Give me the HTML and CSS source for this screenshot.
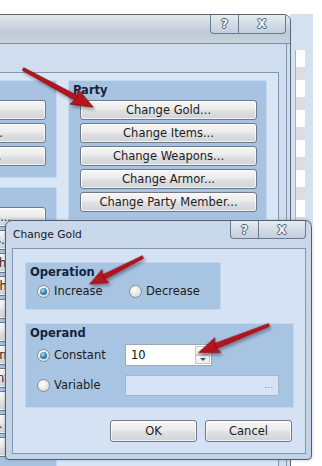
FILE: index.html
```html
<!DOCTYPE html>
<html>
<head>
<meta charset="utf-8">
<link rel="stylesheet" href="styles.css">
</head>
<body>
<div class="desk">
  <div class="win3"><div class="win3-col"></div></div>

  <div class="bgwin">
    <div class="bg-title">
      <div class="caps">
        <span class="cap cap-help">?</span>
        <span class="cap cap-close">X</span>
      </div>
    </div>
    <div class="bg-body">
      <div class="bg-frame">
        <div class="bg-client">
          <div class="col-left">
            <div class="grp grp-l1">
              <div class="grp-title">Message</div>
              <div class="btn-stack">
                <div class="btn">Show Text...</div>
                <div class="btn">Show Choices...</div>
                <div class="btn">Control Timer...</div>
              </div>
            </div>
            <div class="grp grp-l2">
              <div class="grp-title">Game Progression</div>
              <div class="btn-stack">
                <div class="btn">Control Switches...</div>
                <div class="btn">Control Variables...</div>
                <div class="btn">Control Self Switch...</div>
                <div class="btn">Conditional Branch...</div>
                <div class="btn">Loop...</div>
                <div class="btn">Break Loop...</div>
                <div class="btn">Exit Event Processing...</div>
                <div class="btn">Call Common Event...</div>
                <div class="btn">Label...</div>
                <div class="btn">Jump to Label...</div>
                <div class="btn">Comment...</div>
              </div>
            </div>
          </div>
          <div class="grp grp-party">
            <div class="grp-title">Party</div>
            <div class="btn-stack">
              <div class="btn">Change Gold...</div>
              <div class="btn">Change Items...</div>
              <div class="btn">Change Weapons...</div>
              <div class="btn">Change Armor...</div>
              <div class="btn">Change Party Member...</div>
            </div>
          </div>
        </div>
      </div>
    </div>
  </div>

  <div class="dlg">
    <div class="dlg-title">
      <span class="dlg-caption">Change Gold</span>
      <div class="caps">
        <span class="cap cap-help">?</span>
        <span class="cap cap-close">X</span>
      </div>
    </div>
    <div class="dlg-client">
      <div class="box box-op">
        <div class="box-title">Operation</div>
        <div class="op-row">
          <label class="opt opt-inc"><span class="radio on"></span><span>Increase</span></label>
          <label class="opt"><span class="radio"></span><span>Decrease</span></label>
        </div>
      </div>
      <div class="box box-operand">
        <div class="box-title">Operand</div>
        <div class="fld-row">
          <label class="opt opt-fld"><span class="radio on"></span><span>Constant</span></label>
          <div class="num">
            <span class="num-val">10</span>
            <span class="spin">
              <span class="spin-b"><span class="tri tri-up"></span></span>
              <span class="spin-b"><span class="tri tri-down"></span></span>
            </span>
          </div>
        </div>
        <div class="fld-row fld-row2">
          <label class="opt opt-fld"><span class="radio"></span><span>Variable</span></label>
          <div class="var-box"><span class="dots">...</span></div>
        </div>
      </div>
      <div class="dlg-btns">
        <div class="btn dbtn">OK</div>
        <div class="btn dbtn">Cancel</div>
      </div>
    </div>
  </div>

  <svg class="arrows" width="322" height="466" viewBox="0 0 322 466">
    <defs>
      <filter id="sh" x="-20%" y="-50%" width="140%" height="200%">
        <feDropShadow dx="1.5" dy="2.5" stdDeviation="1.4" flood-color="#000" flood-opacity="0.35"/>
      </filter>
    </defs>
    <g filter="url(#sh)" fill="#b3121a" stroke="#860a10" stroke-width="0.6">
      <g transform="translate(23,69) rotate(28.5)">
        <path d="M0,-1.5 L62,-2.7 L62,2.7 L0,1.5 Z"/>
        <path d="M58,-8.5 L80,0 L58,8.5 L61,0 Z"/>
      </g>
      <g transform="translate(143,257) rotate(153)">
        <path d="M0,-1.4 L45,-2.5 L45,2.5 L0,1.4 Z"/>
        <path d="M42,-7.5 L60,0 L42,7.5 L44.5,0 Z"/>
      </g>
      <g transform="translate(269,325) rotate(158.5)">
        <path d="M0,-1.5 L59,-2.7 L59,2.7 L0,1.5 Z"/>
        <path d="M55,-8 L76,0 L55,8 L58,0 Z"/>
      </g>
    </g>
  </svg>
</div>
</body>
</html>
```

FILE: styles.css
```css
* { box-sizing: border-box; margin: 0; padding: 0; }
html, body { width: 322px; height: 466px; overflow: hidden; background: #ffffff; }
body {
  font-family: "DejaVu Sans", Verdana, sans-serif;
  font-size: 11.5px;
  color: #1b1b1b;
}
.desk { position: relative; width: 322px; height: 466px; overflow: hidden; background: #ffffff; }

/* third window peeking on the right */
.win3 {
  position: absolute; left: 290px; top: 14px; width: 23px; height: 210px;
  background: #d3e1f1; padding: 36px 0 0 5px;
}
.win3-col {
  width: 10px; height: 100%;
  border-left: 1px solid #a9b3bf;
  background: repeating-linear-gradient(180deg, #fdfdfd 0 17px, #dcdde1 17px 30px);
}

/* background window */
.bgwin {
  position: absolute; left: -140px; top: 14px; width: 431px; height: 470px;
  border: 1px solid #56667b; border-radius: 0 7px 0 0;
  background: #cfddee;
  display: flex; flex-direction: column;
}
.bg-title {
  height: 29px; flex: none;
  border-bottom: 1px solid #7b8ea6;
  border-radius: 0 6px 0 0;
  background: linear-gradient(180deg, #e2e7ec 0%, #cfd7e0 35%, #bec9d5 65%, #c9d3de 100%);
  display: flex; justify-content: flex-end; align-items: flex-start;
  padding-right: 4px;
}
.caps { display: flex; }
.cap {
  height: 19px;
  display: flex; align-items: center; justify-content: center;
  border: 1px solid #6b7b8f; border-top: 0;
  background: linear-gradient(180deg, #e6ecf2 0%, #d3dce6 50%, #c4cfdc 100%);
  font-family: "DejaVu Sans", sans-serif;
  font-weight: bold; font-size: 12px; color: #f3f6f9;
  text-shadow: 1px 0 0 #4f5d6e, -1px 0 0 #4f5d6e, 0 1px 0 #4f5d6e, 0 -1px 0 #4f5d6e;
}
.cap-help { width: 28px; border-radius: 0 0 0 4px; border-right: 0; }
.cap-close { width: 48px; border-radius: 0 0 4px 0; }

.bg-body { flex: 1; padding-right: 3px; min-height: 0; }
.bg-frame {
  height: 100%;
  border-right: 1px solid #8196af;
  padding: 28px 7px 0 0;
}
.bg-client {
  height: 100%;
  border-top: 1px solid #8196af; border-right: 1px solid #8196af;
  background: #d9e6f5;
  display: flex; gap: 11px;
  padding: 7px 11px 0 8px;
}
.col-left { width: 188px; display: flex; flex-direction: column; gap: 9px; }

.grp {
  background: #a8c3e2;
  border: 1px solid #c7d9ee;
}
.grp-title { font-weight: bold; line-height: 18px; padding-left: 4px; margin-bottom: 1px; color: #14233a; white-space: nowrap; }
.btn-stack { display: flex; flex-direction: column; gap: 3px; }
.grp-l1 { height: 98px; padding: 0 10px 0 0; }
.grp-l1 .grp-title, .grp-l2 .grp-title { visibility: hidden; }
.grp-l1 .btn-stack, .grp-l2 .btn-stack { align-items: flex-end; }
.grp-l2 { flex: 1; padding: 0 10px 0 0; }
.grp-party { width: 199px; height: 140px; padding: 0 9px 0 11px; }
.grp-party .grp-title { padding-left: 4px; margin-left: -11px; padding-left: 4px; }

.btn {
  width: 177px; height: 20px; flex: none;
  border: 1px solid #707a86; border-radius: 3px;
  background: linear-gradient(180deg, #f6f6f6 0%, #ececec 45%, #dfe0e2 55%, #cfd3d8 100%);
  box-shadow: inset 0 0 0 1px rgba(255,255,255,0.7);
  display: flex; align-items: center; justify-content: center;
  line-height: 18px; white-space: nowrap; overflow: hidden;
  color: #1c1c1c;
}

/* dialog */
.dlg {
  position: absolute; left: 5px; top: 220px; width: 307px; height: 240px;
  border: 1px solid #4e5e73; border-radius: 7px 7px 4px 4px;
  background: linear-gradient(180deg, #c9d8ea 0%, #c3d3e7 100%);
  display: flex; flex-direction: column;
  padding: 0 5px 5px 6px;
  box-shadow: 0 0 3px rgba(60,70,90,0.35);
}
.dlg-title {
  height: 27px; flex: none;
  display: flex; justify-content: space-between; align-items: flex-start;
}
.dlg-caption {
  font-size: 10.7px; line-height: 16px; padding: 6px 0 0 1px; color: #1a1a1a;
}
.dlg-title .cap { height: 18px; }
.dlg-client {
  flex: 1;
  border: 1px solid #8397b0;
  background: #d4e2f3;
  padding: 13px 11px 11px 12px;
  display: flex; flex-direction: column;
}
.box {
  background: #a8c4e3;
  border: 1px solid #c4d7ed;
  padding-left: 4px;
}
.box-title { font-weight: bold; line-height: 18px; color: #14233a; }
.box-op { width: 196px; height: 48px; }
.box-operand { width: 269px; height: 85px; margin-top: 13px; }
.op-row { display: flex; align-items: center; height: 20px; padding-left: 7px; }
.opt { display: flex; align-items: center; gap: 4px; white-space: nowrap; }
.opt-inc { width: 92px; }
.opt-fld { width: 88px; }
.radio {
  width: 13px; height: 13px; flex: none; border-radius: 50%;
  border: 1px solid #8a8d91;
  background: radial-gradient(circle at 40% 35%, #ffffff 0%, #e6e6e6 55%, #c9cacc 100%);
  display: flex; align-items: center; justify-content: center;
}
.radio.on::after {
  content: ""; width: 7px; height: 7px; border-radius: 50%;
  background: radial-gradient(circle at 40% 35%, #b7e2f7 0%, #3a8cc0 45%, #174a70 100%);
}
.fld-row { display: flex; align-items: center; height: 22px; padding-left: 7px; margin-top: 2px; }
.fld-row2 { margin-top: 8px; }
.num {
  width: 87px; height: 22px;
  border: 1px solid #9ea7b3; background: #ffffff;
  display: flex;
}
.num-val { flex: 1; padding-left: 5px; line-height: 20px; color: #111; }
.spin { width: 16px; display: flex; flex-direction: column; padding: 1px 1px 1px 0; gap: 0; }
.spin-b {
  flex: 1; border: 1px solid #c3c9d1; background: linear-gradient(#fbfbfb, #e9ecef);
  display: flex; align-items: center; justify-content: center;
}
.tri { width: 0; height: 0; border-left: 3px solid transparent; border-right: 3px solid transparent; }
.tri-up { border-bottom: 3px solid #4a4f55; }
.tri-down { border-top: 3px solid #4a4f55; }
.var-box {
  width: 154px; height: 21px;
  border: 1px solid #a6b6c9; background: #d5e3f4;
  display: flex; align-items: center; justify-content: flex-end;
  padding-right: 5px;
}
.dots { font-size: 9px; color: #7d8b9b; line-height: 10px; }
.dlg-btns { display: flex; justify-content: flex-end; gap: 8px; margin-top: 12px; margin-right: 2px; }
.dbtn { width: 87px; height: 22px; }

.arrows { position: absolute; left: 0; top: 0; pointer-events: none; }
```
